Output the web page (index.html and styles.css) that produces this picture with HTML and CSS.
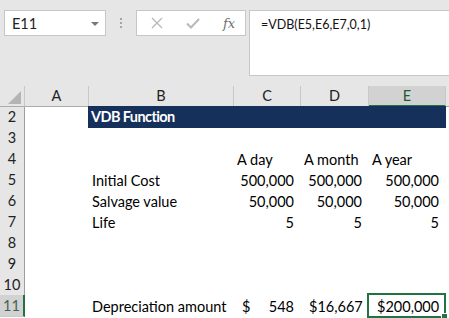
FILE: index.html
```html
<!DOCTYPE html>
<html lang="en">
<head>
  <meta charset="UTF-8">
  <title>VDB Function</title>
  <link rel="stylesheet" href="styles.css">
</head>
<body>
  <div class="toolbar">
    <div class="namebox">
      <span>E11</span>
      <span class="caret"></span>
    </div>
    <div class="grip"><i></i><i></i><i></i></div>
    <div class="fxbox">
      <svg class="icon" width="12" height="12" viewBox="0 0 12 12"><path d="M1 1 L11 11 M11 1 L1 11" stroke="#b9b9b9" stroke-width="1.3" fill="none"/></svg>
      <svg class="icon" width="14" height="11" viewBox="0 0 14 11"><path d="M1 5.5 L5 9.5 L13 1" stroke="#b9b9b9" stroke-width="2" fill="none"/></svg>
      <span class="fx">fx</span>
    </div>
    <div class="formula">=VDB(E5,E6,E7,0,1)</div>
  </div>

  <div class="sheet">
    <div class="row head">
      <div class="corner"><span class="tri"></span></div>
      <div class="col">A</div>
      <div class="col">B</div>
      <div class="col">C</div>
      <div class="col">D</div>
      <div class="col active">E</div>
      <div class="col rest"></div>
    </div>

    <div class="row">
      <div class="num">2</div>
      <div></div>
      <div class="title">VDB Function</div>
    </div>
    <div class="row">
      <div class="num">3</div>
    </div>
    <div class="row">
      <div class="num">4</div>
      <div></div>
      <div></div>
      <div class="cell">A day</div>
      <div class="cell">A month</div>
      <div class="cell">A year</div>
    </div>
    <div class="row">
      <div class="num">5</div>
      <div></div>
      <div class="cell">Initial Cost</div>
      <div class="cell right">500,000</div>
      <div class="cell right">500,000</div>
      <div class="cell right">500,000</div>
    </div>
    <div class="row">
      <div class="num">6</div>
      <div></div>
      <div class="cell">Salvage value</div>
      <div class="cell right">50,000</div>
      <div class="cell right">50,000</div>
      <div class="cell right">50,000</div>
    </div>
    <div class="row">
      <div class="num">7</div>
      <div></div>
      <div class="cell">Life</div>
      <div class="cell right">5</div>
      <div class="cell right">5</div>
      <div class="cell right">5</div>
    </div>
    <div class="row"><div class="num">8</div></div>
    <div class="row"><div class="num">9</div></div>
    <div class="row"><div class="num">10</div></div>
    <div class="row">
      <div class="num active">11</div>
      <div></div>
      <div class="cell">Depreciation amount</div>
      <div class="cell money"><span>$</span><span>548</span></div>
      <div class="cell money"><span>$</span><span>16,667</span></div>
      <div class="cell money selected"><span>$</span><span>200,000</span></div>
    </div>
  </div>
</body>
</html>
```

FILE: styles.css
```css
body {
  margin: 0;
  width: 449px;
  height: 318px;
  overflow: hidden;
  background-color: #fff;
  font-family: Lato, "Open Sans", sans-serif;
  font-size: 14.5px;
  color: #000;
}

.toolbar {
  display: flex;
  align-items: flex-start;
  height: 86px;
  box-sizing: border-box;
  padding: 10px 0 0 4px;
  background-color: #e6e6e6;
}

.toolbar > div {
  flex: none;
}

.namebox {
  display: flex;
  align-items: center;
  justify-content: space-between;
  width: 102px;
  height: 26px;
  box-sizing: border-box;
  padding: 1px 6px 0 7px;
  background-color: #fff;
  border: 1px solid #c6c6c6;
  color: #222;
}

.caret {
  width: 0;
  height: 0;
  border-left: 4px solid transparent;
  border-right: 4px solid transparent;
  border-top: 4px solid #787878;
}

.grip {
  display: flex;
  flex-direction: column;
  gap: 2px;
  margin: 8px 0 0 14px;
}

.grip i {
  width: 2px;
  height: 2px;
  background-color: #a6a6a6;
}

.fxbox {
  display: flex;
  align-items: center;
  width: 110px;
  height: 26px;
  box-sizing: border-box;
  margin-left: 14px;
  padding-left: 14px;
  background-color: #fff;
  border: 1px solid #c6c6c6;
}

.icon {
  margin-right: 23px;
}

.fx {
  font-family: "DejaVu Serif", serif;
  font-style: italic;
  font-size: 13px;
  color: #707070;
}

.formula {
  width: 220px;
  height: 66px;
  box-sizing: border-box;
  margin-left: 3px;
  padding: 6px 0 0 11px;
  background-color: #fff;
  border: 1px solid #c6c6c6;
  font-size: 12.5px;
  color: #111;
}

.row {
  display: grid;
  grid-template-columns: 25px 64px 145px 67px 68px 77px 1fr;
  height: 21px;
}

.row.head {
  height: 20px;
  background-color: #e6e6e6;
}

.corner {
  position: relative;
  border-right: 1px solid #c8c8c8;
  border-bottom: 1px solid #ababab;
}

.tri {
  position: absolute;
  right: 3px;
  bottom: 2px;
  width: 0;
  height: 0;
  border-left: 13px solid transparent;
  border-bottom: 13px solid #b4b4b4;
}

.col {
  box-sizing: border-box;
  border-right: 1px solid #c8c8c8;
  border-bottom: 1px solid #ababab;
  text-align: center;
  line-height: 19px;
  color: #222;
}

.col.active {
  background-color: #d2d2d2;
  border-bottom: 2px solid #217346;
  color: #1e5a3a;
}

.col.rest {
  border-right: none;
}

.num {
  box-sizing: border-box;
  background-color: #e6e6e6;
  border-right: 1px solid #9e9e9e;
  border-bottom: 1px solid #c8c8c8;
  text-align: center;
  line-height: 21px;
  color: #222;
}

.num.active {
  background-color: #d2d2d2;
  border-right: 2px solid #217346;
  color: #41644e;
}

.title {
  grid-column: 3 / 7;
  margin-left: -1px;
  padding-left: 3px;
  background-color: #15305a;
  color: #fff;
  font-weight: bold;
  font-size: 14.5px;
  letter-spacing: -0.6px;
  line-height: 21px;
}

.cell {
  padding: 1px 3px 0;
  line-height: 21px;
  white-space: nowrap;
}

.right {
  text-align: right;
  padding-right: 7px;
}

.money {
  display: flex;
  justify-content: space-between;
  padding: 1px 7px 0 8px;
}

.selected {
  position: relative;
}

.selected::after {
  content: "";
  position: absolute;
  top: -2px;
  left: -2px;
  right: 0;
  bottom: -1px;
  border: 2px solid #217346;
}

.selected::before {
  content: "";
  position: absolute;
  right: -2px;
  bottom: -3px;
  width: 5px;
  height: 5px;
  background-color: #217346;
  border: 1px solid #fff;
  z-index: 1;
}
```
